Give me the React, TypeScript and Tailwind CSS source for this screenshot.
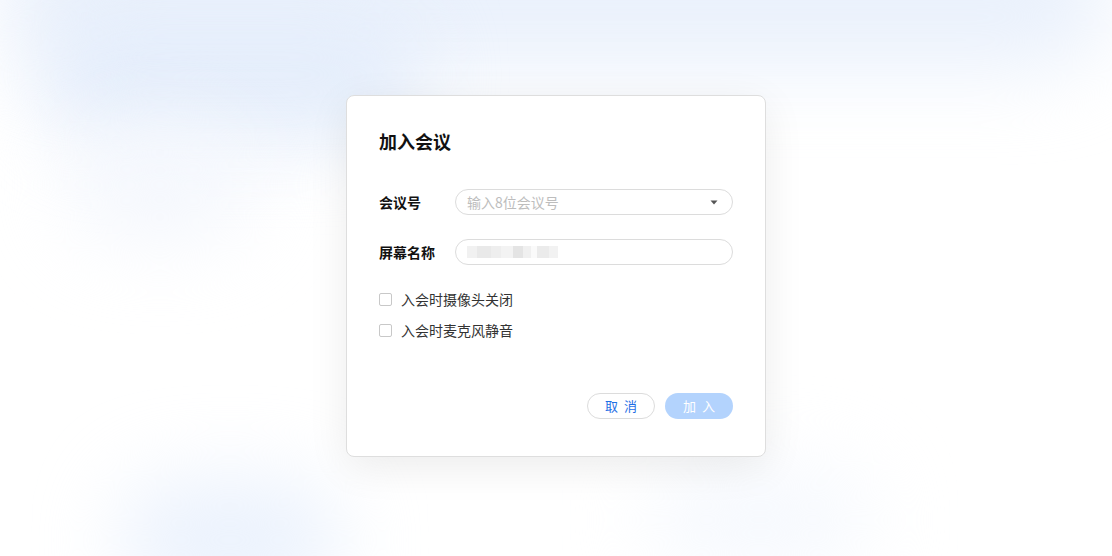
const Field = ({ label, children }: { label: string; children: React.ReactNode }) => (
  <div className="flex items-center h-[26px]">
    <div className="w-[76px] text-[14px] font-bold text-[#111]">{label}</div>
    <div className="flex-1 h-[26px] rounded-full border border-[#dcdcdc] flex items-center pl-[11px] pr-[14px]">
      {children}
    </div>
  </div>
);

const Check = ({ text }: { text: string }) => (
  <label className="flex items-center h-[20px] gap-[9px]">
    <span className="w-[13px] h-[13px] border border-[#c8c8c8] rounded-[2px] bg-white" />
    <span className="text-[14px] text-[#333]">{text}</span>
  </label>
);

const BlurName = () => (
  <div className="flex items-center h-[12px]">
    <span className="w-[10px] h-[12px] bg-[#f1f1f1]" />
    <span className="w-[14px] h-[12px] bg-[#e9e9e9]" />
    <span className="w-[10px] h-[12px] bg-[#eeeeee]" />
    <span className="w-[12px] h-[12px] bg-[#f3f3f3]" />
    <span className="w-[10px] h-[12px] bg-[#e4e4e4]" />
    <span className="w-[8px] h-[12px] bg-[#f0f0f0]" />
    <span className="w-[6px] h-[12px] bg-[#fafafa]" />
    <span className="w-[12px] h-[12px] bg-[#ebebeb]" />
    <span className="w-[9px] h-[12px] bg-[#f2f2f2]" />
  </div>
);

export default function App() {
  return (
    <div
      className="relative w-[1112px] h-[556px] overflow-hidden bg-white"
      style={{ fontFamily: '"Noto Sans CJK SC", "Noto Sans", sans-serif' }}
    >
      {/* soft background blobs */}
      <div className="absolute -top-[80px] left-[0px] w-[1112px] h-[150px] rounded-full bg-[#eaf1fc] blur-[40px]" />
      <div className="absolute top-[10px] left-[40px] w-[380px] h-[130px] rounded-full bg-[#e4edfb] blur-[40px]" />
      <div className="absolute top-[130px] left-[70px] w-[180px] h-[110px] rounded-full bg-[#f4f7fd] blur-[40px]" />
      <div className="absolute top-[480px] left-[120px] w-[220px] h-[120px] rounded-full bg-[#ebf2fd] blur-[40px]" />
      <div className="absolute top-[470px] left-[650px] w-[220px] h-[100px] rounded-full bg-[#f6f9fe] blur-[40px]" />

      <div className="relative flex justify-center pt-[95px]">
        <div className="w-[420px] h-[362px] bg-white border border-[#dedede] rounded-[8px] shadow-[0_10px_40px_rgba(0,0,0,0.08)] px-[32px] pt-[33px] pb-[37px] flex flex-col">
          <h1 className="text-[18px] leading-[24px] font-bold text-[#111]">加入会议</h1>

          <div className="mt-[36px] flex flex-col gap-[24px]">
            <Field label="会议号">
              <span className="flex-1 text-[14px] text-[#bdbdbd]">输入8位会议号</span>
              <svg width="8" height="5" viewBox="0 0 8 5">
                <path d="M0.5 0.5 L7.5 0.5 L4 4.5 Z" fill="#555" />
              </svg>
            </Field>
            <Field label="屏幕名称">
              <BlurName />
            </Field>
          </div>

          <div className="mt-[24px] flex flex-col gap-[11px]">
            <Check text="入会时摄像头关闭" />
            <Check text="入会时麦克风静音" />
          </div>

          <div className="mt-auto flex justify-end gap-[10px]">
            <button className="w-[68px] h-[26px] rounded-full border border-[#dcdcdc] bg-white text-[13px] text-[#1f6fe5] tracking-[6px] pl-[6px]">
              取消
            </button>
            <button className="w-[68px] h-[26px] rounded-full bg-[#b3d3fd] text-[13px] text-white tracking-[6px] pl-[6px]">
              加入
            </button>
          </div>
        </div>
      </div>
    </div>
  );
}
